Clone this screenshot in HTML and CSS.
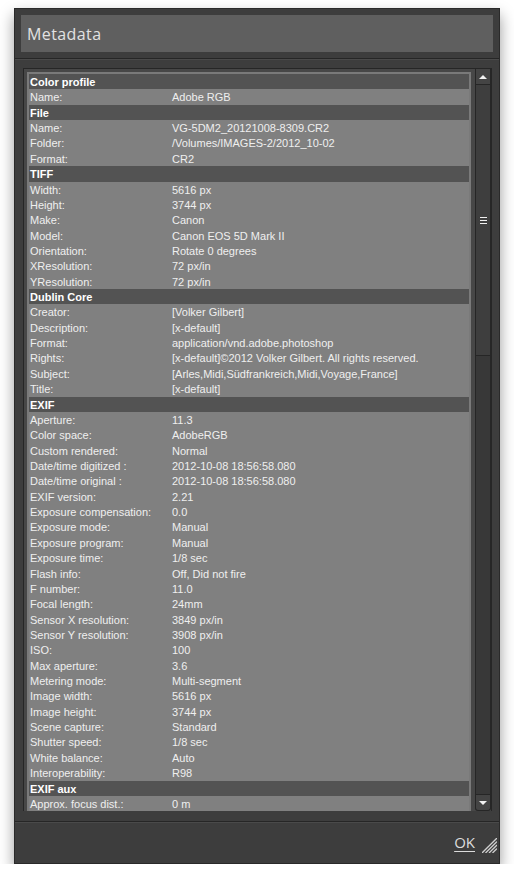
FILE: index.html
```html
<!DOCTYPE html>
<html lang="en">
<head>
  <meta charset="UTF-8" />
  <title>Metadata</title>
  <link rel="stylesheet" href="styles.css">
</head>
<body>

  <div class="window">
    <div class="header">
      <div class="titlebar">Metadata</div>
    </div>

    <div class="content">
      <div class="panel">
        <div class="list">
          <div class="group">Color profile</div>
          <div class="row"><span>Name:</span><span>Adobe RGB</span></div>

          <div class="group">File</div>
          <div class="row"><span>Name:</span><span>VG-5DM2_20121008-8309.CR2</span></div>
          <div class="row"><span>Folder:</span><span>/Volumes/IMAGES-2/2012_10-02</span></div>
          <div class="row"><span>Format:</span><span>CR2</span></div>

          <div class="group">TIFF</div>
          <div class="row"><span>Width:</span><span>5616 px</span></div>
          <div class="row"><span>Height:</span><span>3744 px</span></div>
          <div class="row"><span>Make:</span><span>Canon</span></div>
          <div class="row"><span>Model:</span><span>Canon EOS 5D Mark II</span></div>
          <div class="row"><span>Orientation:</span><span>Rotate 0 degrees</span></div>
          <div class="row"><span>XResolution:</span><span>72 px/in</span></div>
          <div class="row"><span>YResolution:</span><span>72 px/in</span></div>

          <div class="group">Dublin Core</div>
          <div class="row"><span>Creator:</span><span>[Volker Gilbert]</span></div>
          <div class="row"><span>Description:</span><span>[x-default]</span></div>
          <div class="row"><span>Format:</span><span>application/vnd.adobe.photoshop</span></div>
          <div class="row"><span>Rights:</span><span>[x-default]©2012 Volker Gilbert. All rights reserved.</span></div>
          <div class="row"><span>Subject:</span><span>[Arles,Midi,Südfrankreich,Midi,Voyage,France]</span></div>
          <div class="row"><span>Title:</span><span>[x-default]</span></div>

          <div class="group">EXIF</div>
          <div class="row"><span>Aperture:</span><span>11.3</span></div>
          <div class="row"><span>Color space:</span><span>AdobeRGB</span></div>
          <div class="row"><span>Custom rendered:</span><span>Normal</span></div>
          <div class="row"><span>Date/time digitized :</span><span>2012-10-08 18:56:58.080</span></div>
          <div class="row"><span>Date/time original :</span><span>2012-10-08 18:56:58.080</span></div>
          <div class="row"><span>EXIF version:</span><span>2.21</span></div>
          <div class="row"><span>Exposure compensation:</span><span>0.0</span></div>
          <div class="row"><span>Exposure mode:</span><span>Manual</span></div>
          <div class="row"><span>Exposure program:</span><span>Manual</span></div>
          <div class="row"><span>Exposure time:</span><span>1/8 sec</span></div>
          <div class="row"><span>Flash info:</span><span>Off, Did not fire</span></div>
          <div class="row"><span>F number:</span><span>11.0</span></div>
          <div class="row"><span>Focal length:</span><span>24mm</span></div>
          <div class="row"><span>Sensor X resolution:</span><span>3849 px/in</span></div>
          <div class="row"><span>Sensor Y resolution:</span><span>3908 px/in</span></div>
          <div class="row"><span>ISO:</span><span>100</span></div>
          <div class="row"><span>Max aperture:</span><span>3.6</span></div>
          <div class="row"><span>Metering mode:</span><span>Multi-segment</span></div>
          <div class="row"><span>Image width:</span><span>5616 px</span></div>
          <div class="row"><span>Image height:</span><span>3744 px</span></div>
          <div class="row"><span>Scene capture:</span><span>Standard</span></div>
          <div class="row"><span>Shutter speed:</span><span>1/8 sec</span></div>
          <div class="row"><span>White balance:</span><span>Auto</span></div>
          <div class="row"><span>Interoperability:</span><span>R98</span></div>

          <div class="group">EXIF aux</div>
          <div class="row"><span>Approx. focus dist.:</span><span>0 m</span></div>
        </div>

        <div class="scrollbar">
          <div class="sb-btn sb-up"><span class="arrow-up"></span></div>
          <div class="sb-thumb">
            <div class="grip"><i></i><i></i><i></i></div>
          </div>
          <div class="sb-track"></div>
          <div class="sb-btn sb-down"><span class="arrow-down"></span></div>
        </div>
      </div>
    </div>

    <div class="footer">
      <a class="ok">OK</a>
      <svg class="resize" width="15" height="15" viewBox="0 0 15 15">
        <g stroke="#d0d0d0" stroke-width="1.3">
          <line x1="0" y1="15" x2="15" y2="0" />
          <line x1="3.5" y1="15" x2="15" y2="3.5" />
          <line x1="7" y1="15" x2="15" y2="7" />
          <line x1="10.5" y1="15" x2="15" y2="10.5" />
        </g>
      </svg>
    </div>
  </div>

</body>
</html>
```

FILE: styles.css
```css
body {
  margin: 0;
  background: #ffffff;
  font-family: 'Liberation Sans', Arial, sans-serif;
}

.window {
  width: 484px;
  height: 854px;
  margin: 8px 0 0 14px;
  background: #3d3d3d;
  border: 1px solid #2a2a2a;
  box-shadow: 0 7px 14px rgba(0, 0, 0, 0.4);
  display: flex;
  flex-direction: column;
}

.header {
  padding: 6px 6px 6px 6px;
  border-bottom: 1px solid #262626;
}

.titlebar {
  height: 37px;
  line-height: 38px;
  background: #5f5f5f;
  color: #e2e2e2;
  font-family: 'Open Sans', 'DejaVu Sans', sans-serif;
  font-size: 16px;
  letter-spacing: 0.4px;
  padding-left: 6px;
}

.content {
  border-top: 1px solid #4a4a4a;
  border-bottom: 1px solid #262626;
  padding: 8px 7px 10px 8px;
}

.panel {
  display: flex;
  border: 1px solid #262626;
  border-bottom: none;
  background: #474747;
}

.list {
  width: 440px;
  margin: 3px 4px 0 3px;
  border: 2px solid #7a7a7a;
  border-bottom: none;
  background: #808080;
}

.row,
.group {
  height: 15.36px;
  line-height: 16.6px;
  font-size: 11px;
  padding-left: 1px;
  white-space: nowrap;
  overflow: hidden;
}

.row {
  display: grid;
  grid-template-columns: 142px 1fr;
  color: #efefef;
}

.group {
  background: #535353;
  color: #ffffff;
  font-weight: bold;
}

.scrollbar {
  width: 14px;
  border: 1px solid #262626;
  border-top: none;
  border-radius: 0 0 3px 3px;
  background: #383838;
  display: flex;
  flex-direction: column;
}

.sb-btn {
  height: 15px;
  background: #444444;
  display: flex;
  align-items: center;
  justify-content: center;
}

.sb-up {
  border-bottom: 1px solid #262626;
}

.sb-down {
  border-top: 1px solid #262626;
  border-radius: 0 0 3px 3px;
}

.arrow-up {
  width: 0;
  height: 0;
  border-left: 4px solid transparent;
  border-right: 4px solid transparent;
  border-bottom: 4px solid #f2f2f2;
}

.arrow-down {
  width: 0;
  height: 0;
  border-left: 4px solid transparent;
  border-right: 4px solid transparent;
  border-top: 4px solid #f2f2f2;
}

.sb-thumb {
  height: 270px;
  background: #3e3e3e;
  border-bottom: 1px solid #262626;
  display: flex;
  align-items: center;
  justify-content: center;
}

.grip {
  display: flex;
  flex-direction: column;
  gap: 2px;
}

.grip i {
  display: block;
  width: 7px;
  height: 1px;
  background: #f0f0f0;
}

.sb-track {
  flex: 1;
}

.footer {
  flex: 1;
  border-top: 1px solid #4a4a4a;
  display: flex;
  align-items: center;
  justify-content: flex-end;
  padding: 0 2px 2px 0;
}

.ok {
  color: #dcdcdc;
  font-family: 'Open Sans', 'DejaVu Sans', sans-serif;
  font-size: 15px;
  text-decoration: underline;
  text-underline-offset: 3px;
  margin-right: 7px;
  cursor: pointer;
}

.resize {
  display: block;
  margin-top: 6px;
}
```
